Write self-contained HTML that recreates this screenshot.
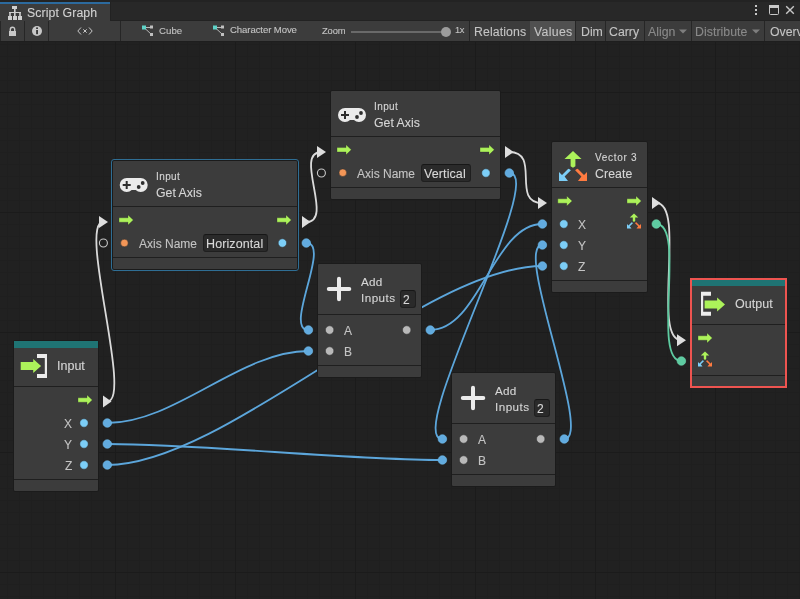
<!DOCTYPE html>
<html><head><meta charset="utf-8"><style>
html,body{margin:0;padding:0;}
body{width:800px;height:599px;overflow:hidden;position:relative;background:#212121;font-family:"Liberation Sans", sans-serif;}
.grid{position:absolute;left:0;top:42px;width:800px;height:557px;
background-image:linear-gradient(to right,#1b1b1b 1px,transparent 1px),linear-gradient(to bottom,#1b1b1b 1px,transparent 1px),linear-gradient(to right,#1f1f1f 1px,transparent 1px),linear-gradient(to bottom,#1f1f1f 1px,transparent 1px);
background-size:120px 120px,120px 120px,12px 12px,12px 12px;
background-position:115px 50px,115px 50px,7px 2px,7px 2px;}
.t{position:absolute;white-space:nowrap;line-height:1;font-family:"Liberation Sans", sans-serif;will-change:transform;-webkit-text-stroke:0.1px currentColor;}
.node{position:absolute;background:#3c3c3c;border:1px solid #1b1b1b;border-radius:2px;}
svg{position:absolute;left:0;top:0;}
</style></head><body>
<div class="grid"></div>
<svg width="800" height="599" viewBox="0 0 800 599"><path d="M107.3 401.4 C133.14 401.4 77.56 222 103.4 222" stroke="#dadada" stroke-width="1.8" fill="none"/><path d="M306.3 222 C334.55 222 293.15 152 321.4 152" stroke="#dadada" stroke-width="1.8" fill="none"/><path d="M509.3 152 C541.42 152 510.28 203 542.4 203" stroke="#dadada" stroke-width="1.8" fill="none"/><path d="M656.3 203 C686.70 203 651.00 340.3 681.4 340.3" stroke="#dadada" stroke-width="1.8" fill="none"/><path d="M306.3 243 C331.75 243 282.95 330 308.4 330" stroke="#5ca6db" stroke-width="1.8" fill="none"/><path d="M107.3 423 C175.54 423 240.16 351 308.4 351" stroke="#5ca6db" stroke-width="1.8" fill="none"/><path d="M430.3 330 C479.40 330 493.30 224 542.4 224" stroke="#5ca6db" stroke-width="1.8" fill="none"/><path d="M107.3 465 C225.85 465 423.85 266 542.4 266" stroke="#5ca6db" stroke-width="1.8" fill="none"/><path d="M107.3 444 C204.35 444 345.35 460 442.4 460" stroke="#5ca6db" stroke-width="1.8" fill="none"/><path d="M509.3 173 C548.68 173 403.02 439 442.4 439" stroke="#5ca6db" stroke-width="1.8" fill="none"/><path d="M564.3 439 C594.01 439 512.69 245 542.4 245" stroke="#5ca6db" stroke-width="1.8" fill="none"/><path d="M656.3 224 C686.70 224 651.00 361 681.4 361" stroke="#5ecba1" stroke-width="1.8" fill="none"/></svg>
<div class="node" style="left:13px;top:340px;width:84px;height:150px;"></div><div style="position:absolute;left:14px;top:341px;width:84px;height:7px;background:#1f7474;"></div><div style="position:absolute;left:14px;top:386px;width:84px;height:1px;background:#1f1f1f;"></div><div style="position:absolute;left:14px;top:479px;width:84px;height:1px;background:#1f1f1f;"></div><div class="t" style="left:57.00px;top:360.02px;font-size:12.5px;color:#d6d6d6;letter-spacing:0px;">Input</div><div class="t" style="left:64.30px;top:418.04px;font-size:12px;color:#c4c4c4;letter-spacing:0px;">X</div><div class="t" style="left:64.30px;top:439.04px;font-size:12px;color:#c4c4c4;letter-spacing:0px;">Y</div><div class="t" style="left:64.80px;top:460.04px;font-size:12px;color:#c4c4c4;letter-spacing:0px;">Z</div><div class="node" style="left:112px;top:160px;width:184px;height:108px;"></div><div style="position:absolute;left:113px;top:206px;width:184px;height:1px;background:#1f1f1f;"></div><div style="position:absolute;left:113px;top:257px;width:184px;height:1px;background:#1f1f1f;"></div><div style="position:absolute;left:111px;top:159px;width:186px;height:110px;border:1px solid #2f6e94;border-radius:3px;"></div><div class="t" style="left:156.40px;top:171.73px;font-size:10px;color:#d6d6d6;letter-spacing:0.4px;">Input</div><div class="t" style="left:156.40px;top:187.09px;font-size:12.3px;color:#d6d6d6;letter-spacing:0px;">Get Axis</div><div class="t" style="left:139.10px;top:237.64px;font-size:12px;color:#c4c4c4;letter-spacing:0px;">Axis Name</div><div style="position:absolute;left:203px;top:234px;width:63px;height:16px;background:#2a2a2a;border:1px solid #1f1f1f;border-top-color:#171717;border-radius:3px;"></div><div class="t" style="left:206.10px;top:238.22px;font-size:12.5px;color:#d8d8d8;letter-spacing:0.1px;">Horizontal</div><div class="node" style="left:330px;top:90px;width:169px;height:108px;"></div><div style="position:absolute;left:331px;top:136px;width:169px;height:1px;background:#1f1f1f;"></div><div style="position:absolute;left:331px;top:187px;width:169px;height:1px;background:#1f1f1f;"></div><div class="t" style="left:374.40px;top:101.73px;font-size:10px;color:#d6d6d6;letter-spacing:0.4px;">Input</div><div class="t" style="left:374.40px;top:117.09px;font-size:12.3px;color:#d6d6d6;letter-spacing:0px;">Get Axis</div><div class="t" style="left:357.20px;top:167.94px;font-size:12px;color:#c4c4c4;letter-spacing:0px;">Axis Name</div><div style="position:absolute;left:421px;top:164px;width:48px;height:16px;background:#2a2a2a;border:1px solid #1f1f1f;border-top-color:#171717;border-radius:3px;"></div><div class="t" style="left:423.90px;top:168.32px;font-size:12.5px;color:#d8d8d8;letter-spacing:0.1px;">Vertical</div><div class="node" style="left:551px;top:141px;width:95px;height:150px;"></div><div style="position:absolute;left:552px;top:187px;width:95px;height:1px;background:#1f1f1f;"></div><div style="position:absolute;left:552px;top:280px;width:95px;height:1px;background:#1f1f1f;"></div><div class="t" style="left:595.20px;top:152.63px;font-size:10px;color:#d6d6d6;letter-spacing:0.7px;">Vector 3</div><div class="t" style="left:594.80px;top:168.49px;font-size:12.3px;color:#d6d6d6;letter-spacing:0.1px;">Create</div><div class="t" style="left:578.00px;top:219.04px;font-size:12px;color:#c4c4c4;letter-spacing:0px;">X</div><div class="t" style="left:578.00px;top:240.04px;font-size:12px;color:#c4c4c4;letter-spacing:0px;">Y</div><div class="t" style="left:578.00px;top:261.04px;font-size:12px;color:#c4c4c4;letter-spacing:0px;">Z</div><div class="node" style="left:690px;top:278px;width:95px;height:108px;"></div><div style="position:absolute;left:691px;top:279px;width:95px;height:7px;background:#1f7474;"></div><div style="position:absolute;left:691px;top:324px;width:95px;height:1px;background:#1f1f1f;"></div><div style="position:absolute;left:691px;top:375px;width:95px;height:1px;background:#1f1f1f;"></div><div style="position:absolute;left:690px;top:278px;width:93px;height:106px;border:2px solid #ee5450;"></div><div class="t" style="left:735.40px;top:298.12px;font-size:12.5px;color:#d6d6d6;letter-spacing:0.05px;">Output</div><div class="node" style="left:317px;top:263px;width:103px;height:113px;"></div><div style="position:absolute;left:318px;top:314px;width:103px;height:1px;background:#1f1f1f;"></div><div style="position:absolute;left:318px;top:365px;width:103px;height:1px;background:#1f1f1f;"></div><div class="t" style="left:361.20px;top:275.60px;font-size:11.7px;color:#d6d6d6;letter-spacing:0.2px;">Add</div><div class="t" style="left:360.80px;top:292.00px;font-size:11.7px;color:#d6d6d6;letter-spacing:0.45px;">Inputs</div><div style="position:absolute;left:400px;top:290px;width:14px;height:16px;background:#2a2a2a;border:1px solid #1f1f1f;border-top-color:#171717;border-radius:3px;"></div><div class="t" style="left:403.40px;top:293.54px;font-size:12px;color:#d8d8d8;letter-spacing:0px;">2</div><div class="t" style="left:344.30px;top:325.14px;font-size:12px;color:#c4c4c4;letter-spacing:0px;">A</div><div class="t" style="left:344.30px;top:346.14px;font-size:12px;color:#c4c4c4;letter-spacing:0px;">B</div><div class="node" style="left:451px;top:372px;width:103px;height:113px;"></div><div style="position:absolute;left:452px;top:423px;width:103px;height:1px;background:#1f1f1f;"></div><div style="position:absolute;left:452px;top:474px;width:103px;height:1px;background:#1f1f1f;"></div><div class="t" style="left:495.20px;top:384.60px;font-size:11.7px;color:#d6d6d6;letter-spacing:0.2px;">Add</div><div class="t" style="left:494.80px;top:401.00px;font-size:11.7px;color:#d6d6d6;letter-spacing:0.45px;">Inputs</div><div style="position:absolute;left:534px;top:399px;width:14px;height:16px;background:#2a2a2a;border:1px solid #1f1f1f;border-top-color:#171717;border-radius:3px;"></div><div class="t" style="left:537.40px;top:402.54px;font-size:12px;color:#d8d8d8;letter-spacing:0px;">2</div><div class="t" style="left:478.30px;top:434.14px;font-size:12px;color:#c4c4c4;letter-spacing:0px;">A</div><div class="t" style="left:478.30px;top:455.14px;font-size:12px;color:#c4c4c4;letter-spacing:0px;">B</div>
<svg width="800" height="599" viewBox="0 0 800 599"><path d="M20.7 362h12.5v-3l7.9 7-7.9 7v-3h-12.5z" fill="#acf25a"/><path d="M37 354h10v24h-10v-4h7.8v-16h-7.8z" fill="#ececec"/><path d="M78.00 397.80h9v-2.9l5.3 5.1-5.3 5.1v-2.9h-9z" fill="#acf25a" stroke="#2a2a2a" stroke-width="0.5" stroke-opacity="0.6"/><circle cx="84" cy="423" r="4.2" fill="#7ccef7" stroke="#303030" stroke-width="0.5"/><circle cx="84" cy="444" r="4.2" fill="#7ccef7" stroke="#303030" stroke-width="0.5"/><circle cx="84" cy="465" r="4.2" fill="#7ccef7" stroke="#303030" stroke-width="0.5"/><g transform="translate(119.7,178)"><path d="M7 0 H21 A7 7 0 0 1 21 14 Q18 14 16 12 H12 Q10 14 7 14 A7 7 0 0 1 7 0 Z" fill="#ebebeb"/><path d="M6 3 h2 v3 h3 v2 h-3 v3 h-2 v-3 h-3 v-2 h3z" fill="#2e2e2e"/><circle cx="23" cy="5" r="1.9" fill="#2e2e2e"/><circle cx="19" cy="9" r="1.9" fill="#2e2e2e"/></g><path d="M119.00 217.80h9v-2.9l5.3 5.1-5.3 5.1v-2.9h-9z" fill="#acf25a" stroke="#2a2a2a" stroke-width="0.5" stroke-opacity="0.6"/><path d="M277.00 217.80h9v-2.9l5.3 5.1-5.3 5.1v-2.9h-9z" fill="#acf25a" stroke="#2a2a2a" stroke-width="0.5" stroke-opacity="0.6"/><circle cx="124.4" cy="243" r="3.8000000000000003" fill="#f39657" stroke="#303030" stroke-width="0.5"/><circle cx="282.4" cy="243" r="4.2" fill="#7ccef7" stroke="#303030" stroke-width="0.5"/><g transform="translate(338,108)"><path d="M7 0 H21 A7 7 0 0 1 21 14 Q18 14 16 12 H12 Q10 14 7 14 A7 7 0 0 1 7 0 Z" fill="#ebebeb"/><path d="M6 3 h2 v3 h3 v2 h-3 v3 h-2 v-3 h-3 v-2 h3z" fill="#2e2e2e"/><circle cx="23" cy="5" r="1.9" fill="#2e2e2e"/><circle cx="19" cy="9" r="1.9" fill="#2e2e2e"/></g><path d="M337.00 147.55h9v-2.9l5.3 5.1-5.3 5.1v-2.9h-9z" fill="#acf25a" stroke="#2a2a2a" stroke-width="0.5" stroke-opacity="0.6"/><path d="M480.00 147.55h9v-2.9l5.3 5.1-5.3 5.1v-2.9h-9z" fill="#acf25a" stroke="#2a2a2a" stroke-width="0.5" stroke-opacity="0.6"/><circle cx="342.8" cy="172.7" r="3.8000000000000003" fill="#f39657" stroke="#303030" stroke-width="0.5"/><circle cx="485.9" cy="173" r="4.2" fill="#7ccef7" stroke="#303030" stroke-width="0.5"/><g transform="translate(557,150) scale(1.0)"><path d="M16 1 L24.5 9 H18.4 V16.2 L16 17.8 L13.6 16.2 V9 H7.5 Z" fill="#acf25a"/><path d="M2 31 V22 L5 25 L11.3 18.7 Q12.8 18.7 13.9 20.3 L7.6 26.6 L11 31 Z" fill="#7ccef7"/><path d="M30 31 V22 L27 25 L20.7 18.7 Q19.2 18.7 18.1 20.3 L24.4 26.6 L21 31 Z" fill="#ff7b40"/></g><path d="M557.80 198.80h9v-2.9l5.3 5.1-5.3 5.1v-2.9h-9z" fill="#acf25a" stroke="#2a2a2a" stroke-width="0.5" stroke-opacity="0.6"/><path d="M627.00 198.80h9v-2.9l5.3 5.1-5.3 5.1v-2.9h-9z" fill="#acf25a" stroke="#2a2a2a" stroke-width="0.5" stroke-opacity="0.6"/><circle cx="563.8" cy="224" r="4.2" fill="#7ccef7" stroke="#303030" stroke-width="0.5"/><circle cx="563.8" cy="245" r="4.2" fill="#7ccef7" stroke="#303030" stroke-width="0.5"/><circle cx="563.8" cy="266" r="4.2" fill="#7ccef7" stroke="#303030" stroke-width="0.5"/><g transform="translate(626,213) scale(0.5)"><path d="M16 1 L24.5 9 H18.4 V16.2 L16 17.8 L13.6 16.2 V9 H7.5 Z" fill="#acf25a"/><path d="M2 31 V22 L5 25 L11.3 18.7 Q12.8 18.7 13.9 20.3 L7.6 26.6 L11 31 Z" fill="#7ccef7"/><path d="M30 31 V22 L27 25 L20.7 18.7 Q19.2 18.7 18.1 20.3 L24.4 26.6 L21 31 Z" fill="#ff7b40"/></g><path d="M701 291.7h10v4h-7.8v16h7.8v4h-10z" fill="#ececec"/><path d="M704.6 300.5h12.5v-3l7.9 7-7.9 7v-3h-12.5z" fill="#acf25a"/><path d="M698.00 335.80h9v-2.9l5.3 5.1-5.3 5.1v-2.9h-9z" fill="#acf25a" stroke="#2a2a2a" stroke-width="0.5" stroke-opacity="0.6"/><g transform="translate(697,351) scale(0.5)"><path d="M16 1 L24.5 9 H18.4 V16.2 L16 17.8 L13.6 16.2 V9 H7.5 Z" fill="#acf25a"/><path d="M2 31 V22 L5 25 L11.3 18.7 Q12.8 18.7 13.9 20.3 L7.6 26.6 L11 31 Z" fill="#7ccef7"/><path d="M30 31 V22 L27 25 L20.7 18.7 Q19.2 18.7 18.1 20.3 L24.4 26.6 L21 31 Z" fill="#ff7b40"/></g><path d="M328.8 289h20.5M339 278.8v20.5" stroke="#ebebeb" stroke-width="4" stroke-linecap="round"/><circle cx="329.6" cy="330" r="4.2" fill="#b9b9b9" stroke="#303030" stroke-width="0.5"/><circle cx="329.6" cy="351" r="4.2" fill="#b9b9b9" stroke="#303030" stroke-width="0.5"/><circle cx="406.7" cy="330" r="4.2" fill="#b9b9b9" stroke="#303030" stroke-width="0.5"/><path d="M462.8 398h20.5M473 387.8v20.5" stroke="#ebebeb" stroke-width="4" stroke-linecap="round"/><circle cx="463.6" cy="439" r="4.2" fill="#b9b9b9" stroke="#303030" stroke-width="0.5"/><circle cx="463.6" cy="460" r="4.2" fill="#b9b9b9" stroke="#303030" stroke-width="0.5"/><circle cx="540.7" cy="439" r="4.2" fill="#b9b9b9" stroke="#303030" stroke-width="0.5"/><circle cx="107.3" cy="423" r="4.3" fill="#62abdf" stroke="#70bdee" stroke-width="0.6"/><circle cx="107.3" cy="444" r="4.3" fill="#62abdf" stroke="#70bdee" stroke-width="0.6"/><circle cx="107.3" cy="465" r="4.3" fill="#62abdf" stroke="#70bdee" stroke-width="0.6"/><path d="M103 395.4 L111.5 401.4 L103 407.4 Z" fill="#dedede"/><path d="M99 216 L108 222 L99 228 Z" fill="#dedede"/><circle cx="103.4" cy="243" r="4" fill="none" stroke="#c8c8c8" stroke-width="1.1"/><path d="M302 216 L310.5 222 L302 228 Z" fill="#dedede"/><circle cx="306.3" cy="243" r="4.3" fill="#62abdf" stroke="#70bdee" stroke-width="0.6"/><path d="M317 146 L326 152 L317 158 Z" fill="#dedede"/><circle cx="321.4" cy="173" r="4" fill="none" stroke="#c8c8c8" stroke-width="1.1"/><path d="M505 146 L513.5 152 L505 158 Z" fill="#dedede"/><circle cx="509.3" cy="173" r="4.3" fill="#62abdf" stroke="#70bdee" stroke-width="0.6"/><circle cx="542.4" cy="224" r="4.3" fill="#62abdf" stroke="#70bdee" stroke-width="0.6"/><circle cx="542.4" cy="245" r="4.3" fill="#62abdf" stroke="#70bdee" stroke-width="0.6"/><circle cx="542.4" cy="266" r="4.3" fill="#62abdf" stroke="#70bdee" stroke-width="0.6"/><path d="M538 197 L547 203 L538 209 Z" fill="#dedede"/><path d="M652 197 L660.5 203 L652 209 Z" fill="#dedede"/><circle cx="656.3" cy="224" r="4.3" fill="#5ecba1" stroke="#6fdcb2" stroke-width="0.6"/><path d="M677 334.3 L686 340.3 L677 346.3 Z" fill="#dedede"/><circle cx="681.4" cy="361" r="4.3" fill="#5ecba1" stroke="#6fdcb2" stroke-width="0.6"/><circle cx="308.4" cy="330" r="4.3" fill="#62abdf" stroke="#70bdee" stroke-width="0.6"/><circle cx="308.4" cy="351" r="4.3" fill="#62abdf" stroke="#70bdee" stroke-width="0.6"/><circle cx="430.3" cy="330" r="4.3" fill="#62abdf" stroke="#70bdee" stroke-width="0.6"/><circle cx="442.4" cy="439" r="4.3" fill="#62abdf" stroke="#70bdee" stroke-width="0.6"/><circle cx="442.4" cy="460" r="4.3" fill="#62abdf" stroke="#70bdee" stroke-width="0.6"/><circle cx="564.3" cy="439" r="4.3" fill="#62abdf" stroke="#70bdee" stroke-width="0.6"/></svg>
<div style="position:absolute;left:0px;top:0px;width:800px;height:21px;background:#282828;"></div><div style="position:absolute;left:0px;top:0px;width:800px;height:2px;background:#232323;"></div><div style="position:absolute;left:110px;top:20px;width:690px;height:1px;background:#222222;"></div><div style="position:absolute;left:110px;top:2px;width:1px;height:19px;background:#222222;"></div><div style="position:absolute;left:0px;top:2px;width:110px;height:19px;background:#3c3c3c;"></div><div style="position:absolute;left:0px;top:2px;width:110px;height:2px;background:#2c6a9e;"></div><div style="position:absolute;left:0px;top:21px;width:800px;height:20px;background:#3c3c3c;"></div><div style="position:absolute;left:0px;top:41px;width:800px;height:1px;background:#1e1e1e;"></div><div style="position:absolute;left:0px;top:21px;width:1px;height:20px;background:#262626;"></div><div style="position:absolute;left:24px;top:21px;width:1px;height:20px;background:#262626;"></div><div style="position:absolute;left:48px;top:21px;width:1px;height:20px;background:#262626;"></div><div style="position:absolute;left:120px;top:21px;width:1px;height:20px;background:#262626;"></div><div style="position:absolute;left:469px;top:21px;width:1px;height:20px;background:#262626;"></div><div style="position:absolute;left:575px;top:21px;width:1px;height:20px;background:#262626;"></div><div style="position:absolute;left:605px;top:21px;width:1px;height:20px;background:#262626;"></div><div style="position:absolute;left:644px;top:21px;width:1px;height:20px;background:#262626;"></div><div style="position:absolute;left:691px;top:21px;width:1px;height:20px;background:#262626;"></div><div style="position:absolute;left:764px;top:21px;width:1px;height:20px;background:#262626;"></div><div style="position:absolute;left:530px;top:21px;width:45px;height:20px;background:#505050;"></div><div class="t" style="left:26.80px;top:7.09px;font-size:12.3px;color:#d2d2d2;letter-spacing:0.1px">Script Graph</div><div class="t" style="left:159.00px;top:25.69px;font-size:9.7px;color:#c4c4c4;letter-spacing:0px">Cube</div><div class="t" style="left:230.00px;top:25.37px;font-size:9.6px;color:#c4c4c4;letter-spacing:-0.1px">Character Move</div><div class="t" style="left:322.00px;top:26.04px;font-size:9.4px;color:#c4c4c4;letter-spacing:-0.15px">Zoom</div><div class="t" style="left:454.50px;top:25.63px;font-size:9.3px;color:#c4c4c4;letter-spacing:-0.3px">1x</div><div class="t" style="left:473.60px;top:25.59px;font-size:12.3px;color:#c4c4c4;letter-spacing:0.1px">Relations</div><div class="t" style="left:534.00px;top:25.59px;font-size:12.3px;color:#c4c4c4;letter-spacing:0.3px">Values</div><div class="t" style="left:580.50px;top:25.59px;font-size:12.3px;color:#c4c4c4;letter-spacing:0px">Dim</div><div class="t" style="left:609.40px;top:25.59px;font-size:12.3px;color:#c4c4c4;letter-spacing:0px">Carry</div><div class="t" style="left:648.00px;top:25.59px;font-size:12.3px;color:#8a8a8a;letter-spacing:0px">Align</div><div class="t" style="left:694.60px;top:25.59px;font-size:12.3px;color:#8a8a8a;letter-spacing:0.05px">Distribute</div><div class="t" style="left:769.70px;top:25.59px;font-size:12.3px;color:#c4c4c4;letter-spacing:0px">Overview</div>
<svg width="800" height="42" viewBox="0 0 800 42"><g fill="#cfcfcf"><rect x="12" y="6" width="5" height="3"/><rect x="14" y="9" width="1.6" height="3"/><rect x="9" y="12" width="12" height="1"/><rect x="9.2" y="13" width="1.6" height="3"/><rect x="14" y="13" width="1.6" height="3"/><rect x="19.2" y="13" width="1.6" height="3"/><rect x="8" y="16" width="4" height="4"/><rect x="13" y="16" width="4" height="4"/><rect x="18" y="16" width="4" height="4"/></g><path d="M10.3 31.2v-1.8a2.2 2.2 0 0 1 4.4 0v1.8" fill="none" stroke="#c8c8c8" stroke-width="1.4"/><rect x="9" y="31" width="7" height="5" fill="#c8c8c8"/><circle cx="37" cy="31" r="5" fill="#c8c8c8"/><rect x="36.2" y="30" width="1.7" height="4.2" fill="#2c2c2c"/><rect x="36.2" y="27.4" width="1.7" height="1.6" fill="#2c2c2c"/><path d="M81 27.5l-3.2 3.5 3.2 3.5M89 27.5l3.2 3.5-3.2 3.5M83.3 29.3l3.4 3.4M86.7 29.3l-3.4 3.4" stroke="#c8c8c8" stroke-width="1" fill="none"/><g transform="translate(0,0)"><path d="M144 27.5H151.5M144 27.5L151.5 34.5" stroke="#b8b8b8" stroke-width="1"/><rect x="142" y="25.5" width="4" height="4" fill="#5fd3c8"/><rect x="150" y="25.5" width="3" height="3" fill="#c0c0c0"/><rect x="150" y="33" width="3" height="3" fill="#c0c0c0"/></g><g transform="translate(71,0)"><path d="M144 27.5H151.5M144 27.5L151.5 34.5" stroke="#b8b8b8" stroke-width="1"/><rect x="142" y="25.5" width="4" height="4" fill="#5fd3c8"/><rect x="150" y="25.5" width="3" height="3" fill="#c0c0c0"/><rect x="150" y="33" width="3" height="3" fill="#c0c0c0"/></g><rect x="351" y="31" width="92" height="2" fill="#6a6a6a"/><circle cx="446" cy="32" r="5" fill="#9c9c9c"/><path d="M679 29.5h8l-4 4z" fill="#7e7e7e"/><path d="M752 29.5h8l-4 4z" fill="#7e7e7e"/><rect x="755" y="5" width="2" height="2" fill="#c8c8c8"/><rect x="755" y="9" width="2" height="2" fill="#c8c8c8"/><rect x="755" y="13" width="2" height="2" fill="#c8c8c8"/><rect x="769.5" y="5.5" width="9" height="9" rx="1" fill="none" stroke="#c8c8c8" stroke-width="1"/><rect x="769" y="5" width="10" height="3" fill="#c8c8c8"/><path d="M786.2 6.2l7.6 7.6M793.8 6.2l-7.6 7.6" stroke="#c8c8c8" stroke-width="1.4"/></svg>
</body></html>
